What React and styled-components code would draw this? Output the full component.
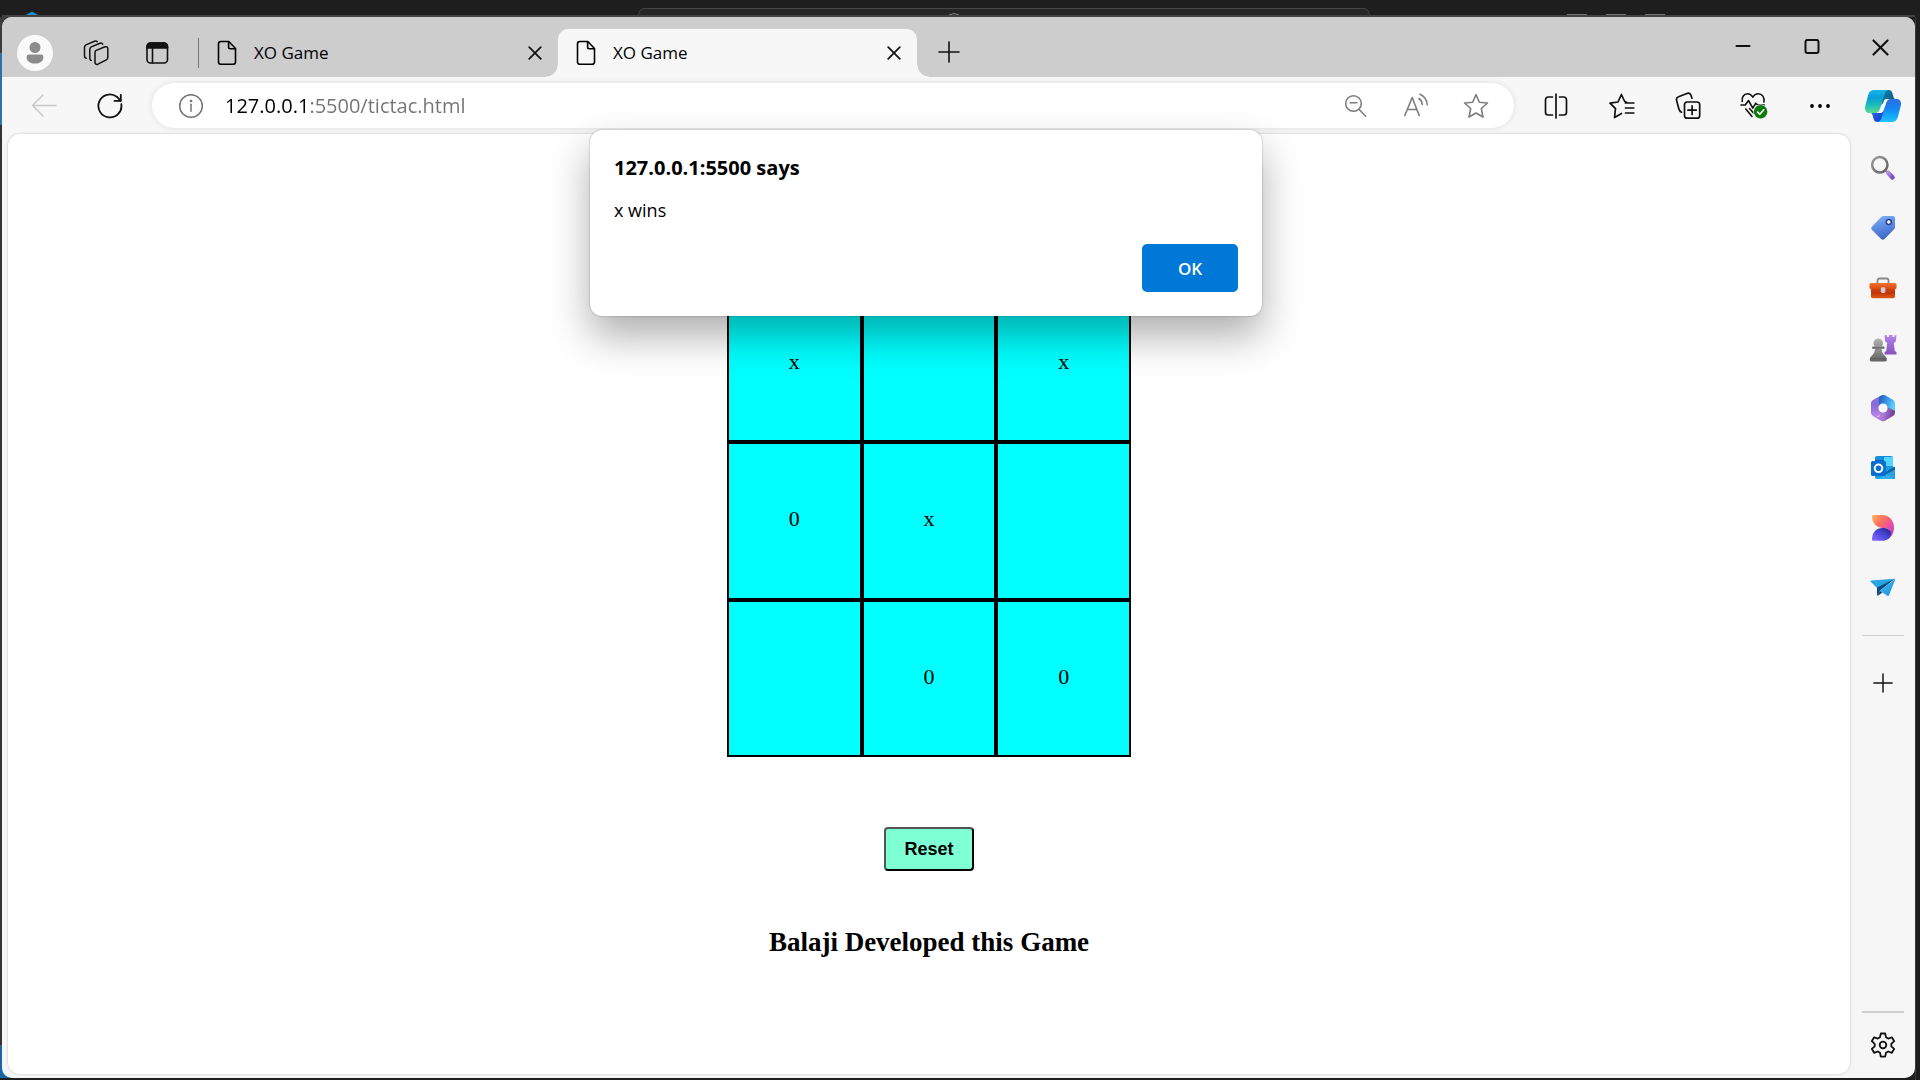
import React, { useState } from "react";
import styled, { createGlobalStyle, css } from "styled-components";

const ui = `"Open Sans", "Noto Sans", sans-serif`;
const serif = `"Liberation Serif", "Times New Roman", serif`;

const GlobalStyle = createGlobalStyle`
  * { box-sizing: border-box; }
  body { margin: 0; background: #1e1e1e; font-family: ${ui}; color: #000; }
  button, input { font: inherit; color: inherit; }
`;

/* ---------- desktop behind the browser ---------- */

const Desktop = styled.div`
  min-height: 100vh;
  display: flex;
  flex-direction: column;
  padding: 0 5px 2px 2px;
  background:
    linear-gradient(#3a3a3a, #3a3a3a) right 4px top 17px / 1px 100% no-repeat,
    linear-gradient(
      #1e1e1e 17px, #3c3c3c 17px, #3c3c3c 53px, #2b73ad 53px, #2b73ad 125px,
      #333 125px, #333 calc(100% - 33px), #1c66a5 calc(100% - 33px)
    ) left top / 12px calc(100% - 2px) no-repeat,
    #1e1e1e;
`;

const EditorTitle = styled.div`
  height: 17px;
  overflow: hidden;
  display: grid;
  grid-template-columns: 636px 732px 1fr;
  align-items: end;
  border-bottom: 2px solid #434343;
`;

const EditorLogo = styled.svg`
  width: 12px;
  height: 3px;
  margin-left: 24px;
`;

const CommandCenter = styled.div`
  height: 7px;
  display: flex;
  justify-content: center;
  align-items: flex-end;
  padding-right: 100px;
  border: 1px solid #464646;
  border-bottom: 0;
  border-radius: 7px 7px 0 0;
  background: #262626;
`;

const LayoutDots = styled.div`
  display: flex;
  justify-content: flex-end;
  gap: 19px;
  padding-right: 250px;
`;

const LayoutDot = styled.span`
  width: 20px;
  height: 1px;
  background: #777;
`;

/* ---------- browser frame ---------- */

const Browser = styled.div`
  flex: 1;
  display: flex;
  flex-direction: column;
  overflow: hidden;
  border-radius: 10px;
  background: #f6f6f6;
`;

const TabStrip = styled.header`
  height: 60px;
  display: flex;
  align-items: flex-end;
  padding-left: 15px;
  background: #cdcdcd;
`;

const StripTools = styled.div`
  height: 48px;
  display: flex;
  align-items: center;
  gap: 25px;
  padding-right: 23px;
`;

const IconButton = styled.button`
  display: flex;
  align-items: center;
  justify-content: center;
  width: ${(p) => p.$w || 36}px;
  height: ${(p) => p.$h || 36}px;
  padding: 0;
  border: 0;
  border-radius: ${(p) => (p.$round ? "50%" : "4px")};
  background: ${(p) => (p.$round ? "#fafafa" : "transparent")};
  color: ${(p) => p.$color || "#111"};
  svg { display: block; flex: none; }
`;

const Tab = styled.div`
  position: relative;
  width: 359px;
  height: 48px;
  display: flex;
  align-items: center;
  padding: 0 8px 0 18px;
  border-radius: 10px 10px 0 0;
  ${(p) =>
    p.$active &&
    css`
      background: #f7f7f7;
      &::before, &::after {
        content: "";
        position: absolute;
        bottom: 0;
        width: 12px;
        height: 12px;
      }
      &::before {
        right: 100%;
        background: radial-gradient(circle at 0 0, transparent 11px, #f7f7f7 12px);
      }
      &::after {
        left: 100%;
        background: radial-gradient(circle at 100% 0, transparent 11px, #f7f7f7 12px);
      }
    `}
`;

const TabDivider = styled.span`
  width: 1px;
  height: 30px;
  margin-bottom: 9px;
  background: #767676;
`;

const TabTitle = styled.button`
  flex: 1;
  display: flex;
  align-items: center;
  gap: 17px;
  padding: 0;
  border: 0;
  background: transparent;
  font-size: 17px;
  line-height: 24px;
`;

const NewTab = styled.div`
  height: 48px;
  display: flex;
  align-items: center;
  padding: 0 0 2px 15px;
`;

const WindowControls = styled.div`
  height: 60px;
  display: flex;
  margin-left: auto;
`;

/* ---------- toolbar ---------- */

const Toolbar = styled.div`
  display: flex;
  align-items: center;
  padding: 6px 2px 6px 9px;
  background: #f7f7f7;
`;

const AddressBar = styled.form`
  flex: 1;
  height: 45px;
  display: flex;
  align-items: center;
  margin: 0 9px;
  padding: 0 8px 0 9px;
  border-radius: 23px;
  background: #fff;
  box-shadow: 0 0 6px rgba(0, 0, 0, 0.1);
`;

const AddressInput = styled.input`
  flex: 1;
  min-width: 0;
  height: 28px;
  margin-left: 4px;
  padding: 0;
  border: 0;
  outline: 0;
  font-size: 20px;
  line-height: 28px;
  background: linear-gradient(90deg, #000 83px, #737373 83px);
  background-clip: text;
  -webkit-background-clip: text;
  -webkit-text-fill-color: transparent;
`;

/* ---------- body: page and side rail ---------- */

const Body = styled.div`
  flex: 1;
  display: flex;
`;

const Stage = styled.div`
  position: relative;
  flex: 1;
  display: flex;
  padding: 0 0 4px 6px;
`;

const Page = styled.main`
  flex: 1;
  display: flex;
  flex-direction: column;
  align-items: center;
  padding-top: 151px;
  border-radius: 12px;
  background: #fff;
  box-shadow: 0 0 3px rgba(0, 0, 0, 0.2);
  font-family: ${serif};
`;

const Board = styled.div`
  width: 404px;
  height: 472px;
  display: grid;
  grid-template-columns: repeat(3, 1fr);
  grid-template-rows: repeat(3, 1fr);
`;

const Cell = styled.button`
  padding: 0 0 3px;
  border: 2px solid #000;
  border-radius: 0;
  background: aqua;
  font-size: 22px;
  line-height: 26px;
`;

const ResetButton = styled.button`
  width: 90px;
  height: 44px;
  margin-top: 70px;
  padding: 0;
  border: 2px solid;
  border-color: #555 #000 #000 #555;
  border-radius: 4px;
  background: aquamarine;
  font: bold 18px/24px "Liberation Sans", Arial, sans-serif;
`;

const Credit = styled.h2`
  margin: 55px 0 0;
  font-size: 27px;
  line-height: 32px;
`;

const Dialog = styled.div`
  position: absolute;
  top: -4px;
  left: 50%;
  width: 672px;
  transform: translateX(-50%);
  display: flex;
  flex-direction: column;
  padding: 24px;
  border-radius: 12px;
  background: #fff;
  box-shadow: 0 0 2px rgba(0, 0, 0, 0.35), 0 20px 40px rgba(0, 0, 0, 0.32);
`;

const DialogTitle = styled.h1`
  margin: 0;
  font-size: 20px;
  font-weight: 700;
  line-height: 28px;
`;

const DialogText = styled.p`
  margin: 15px 0 21px;
  font-size: 18px;
  line-height: 26px;
`;

const DialogOk = styled.button`
  align-self: flex-end;
  width: 96px;
  height: 48px;
  border: 0;
  border-radius: 5px;
  background: #0078d7;
  color: #fff;
  font-size: 17px;
  font-weight: 600;
`;

const Rail = styled.aside`
  width: 65px;
  display: flex;
  flex-direction: column;
  align-items: center;
  padding: 4px 0 3px;
`;

const RailLine = styled.hr`
  width: 42px;
  height: ${(p) => p.$thick || 1}px;
  margin: ${(p) => p.$m};
  border: 0;
  background: #cfcfcf;
`;

/* ---------- line icons ---------- */

const Line = ({ w = 24, h = 24, sw = 1.6, vb, children }) => (
  <svg width={w} height={h} viewBox={vb || `0 0 ${w} ${h}`} fill="none" stroke="currentColor"
    strokeWidth={sw} strokeLinecap="round" strokeLinejoin="round" aria-hidden="true">
    {children}
  </svg>
);

const PersonIcon = () => (
  <svg width="18" height="22" viewBox="0 0 18 22" fill="#8c8c8c" aria-hidden="true">
    <circle cx="9" cy="5.5" r="5.5" />
    <path d="M3 12.5H15a2.4 2.4 0 0 1 2.4 2.4C17.4 19 14 21.5 9 21.5S.6 19 .6 14.9A2.4 2.4 0 0 1 3 12.5Z" />
  </svg>
);
const WorkspacesIcon = () => (
  <Line w={26} h={26} sw={1.5}>
    <path d="M12.600 10.600 22 6.800c1.500-.5 2.800.2 2.800 1.800v9c0 1.100-.5 1.900-1.500 2.300l-8.400 4.300c-1.500.6-2.900-.1-2.900-1.700v-9.400c0-1.200.2-2 .6-2.500Z" />
    <path d="M8.200 20.500c-1-.3-1.400-1-1.400-2V9.300c0-1.100.5-1.900 1.500-2.400L17 3.300c1.200-.5 2.200-.2 2.700.8" />
    <path d="M3.200 18.200c-1-.3-1.700-1-1.700-2V7.300c0-1.100.5-1.900 1.500-2.400L11.500 1.300c1.200-.4 2.200-.2 2.800.5" />
  </Line>
);
const TabActionsIcon = () => (
  <Line w={24} h={24} sw={1.6}>
    <rect x="2" y="2" width="20.500" height="20" rx="3.500" />
    <path d="M2 7V5.500A3.500 3.500 0 0 1 5.500 2h13.500A3.500 3.500 0 0 1 22.500 5.500V7Z" fill="currentColor" />
    <path d="M7.500 7v15" />
  </Line>
);
const FileIcon = () => (
  <Line w={20} h={26} sw={1.600}>
    <path d="M3.800 1.500H11.800L18.500 8.500V22a2.300 2.300 0 0 1-2.300 2.300H3.800A2.300 2.300 0 0 1 1.500 22V3.800A2.300 2.300 0 0 1 3.800 1.500Z" />
    <path d="M11.600 1.800V7a1.700 1.700 0 0 0 1.700 1.700h5" />
  </Line>
);
const CloseIcon = ({ s = 14, sw = 1.7 }) => (
  <Line w={s} h={s} vb="0 0 14 14" sw={sw}><path d="M1.200 1.200l11.600 11.600M12.800 1.200 1.200 12.800" /></Line>
);
const PlusIcon = ({ s = 22 }) => (
  <Line w={s} h={s} vb="0 0 22 22" sw={1.6}><path d="M11 1v20M1 11h20" /></Line>
);
const MinimizeIcon = () => <Line w={16} h={16} sw={2}><path d="M1.500 7h13" /></Line>;
const MaximizeIcon = () => <Line w={16} h={16} sw={2}><rect x="1.500" y=".9" width="13" height="13.200" rx="2" /></Line>;
const BackIcon = () => <Line w={26} h={24} sw={1.5}><path d="M25 11.500H1.500M12 1 1.500 11.500 12 22" /></Line>;
const ReloadIcon = () => (
  <Line w={26} h={26} sw={1.8}>
    <path d="M24.300 11.200A11.500 11.500 0 1 1 19.800 3.700L23.600 7.600" />
    <path d="M23.800 1.800v6.100h-6.300" />
  </Line>
);
const InfoIcon = () => (
  <Line w={26} h={26} sw={1.5}>
    <circle cx="13" cy="13" r="11.300" />
    <path d="M13 11.300v7" /><circle cx="13" cy="8" r=".6" fill="currentColor" />
  </Line>
);
const ZoomOutIcon = () => (
  <Line w={24} h={24} sw={1.6}><circle cx="9.500" cy="9.500" r="7.800" /><path d="M15.200 15.500 21.700 22.200M6.200 8.800h6.600" /></Line>
);
const ReadAloudIcon = () => (
  <Line w={26} h={26} sw={1.6}>
    <path d="M1.800 22.500 9.200 4.500l7 18M4.500 16.500h9.400" />
    <path d="M16 5.500c2 1.500 3 3.300 3.200 6M17 1.300c4.300 2 6.900 5.500 7.200 10.500" />
  </Line>
);
const StarIcon = () => (
  <Line w={26} h={26} sw={1.6}>
    <path d="M13 1.500 16.300 9.200 24.500 10 18.300 15.500 20 24 13 20 6 24 7.700 15.500 1.500 10 9.700 9.200Z" />
  </Line>
);
const SplitIcon = () => (
  <Line w={24} h={26} sw={1.7}>
    <path d="M8.500 4H4.200A2.700 2.700 0 0 0 1.500 6.700v12.600A2.700 2.700 0 0 0 4.200 22H8.500M15.500 4h4.300a2.700 2.700 0 0 1 2.700 2.700v12.600a2.700 2.700 0 0 1-2.700 2.700H15.500M12 1v24" />
  </Line>
);
const FavoritesIcon = () => (
  <Line w={26} h={26} sw={1.7}>
    <path d="M12.500 20.500 5.500 24.500l1-8.800L1 10.200 9 9 12.400 1.500 15.700 8.500 17.500 9.300M16.500 10h8.300M16.500 15h8.300M16.500 20h8.300" />
  </Line>
);
const CollectionsIcon = () => (
  <Line w={26} h={28} sw={1.700}>
    <rect x="9.500" y="10" width="15.200" height="16.200" rx="2.800" />
    <path d="M17.100 13.800v8.600M12.900 18.100h8.400" />
    <path d="M6.500 20.200C5 19.500 4.300 18.500 3.900 17L1.600 8.500C1.100 6.500 1.800 5.300 3.600 4.700L12.500 1.300c1.700-.4 3 .4 3.500 2l.9 3" />
  </Line>
);
const EssentialsIcon = () => (
  <svg width="28" height="28" viewBox="0 0 28 28" fill="none" stroke="currentColor" strokeWidth="1.600" strokeLinecap="round" strokeLinejoin="round" aria-hidden="true">
    <path d="M2.300 9.500C1.400 5 4 1.700 7.600 1.700c2.400 0 4 1.300 5.200 3.500 1.200-2.200 3-3.500 5.400-3.500 4 0 6.600 3.600 5.700 8.300" />
    <path d="M1 13h4.300L8.500 8.500l4.300 7.700 3-5 1.700 1.800h6.800" />
    <path d="M5.800 17 12 24.500M9.500 16.500l4 4.500" />
    <circle cx="20.600" cy="19.800" r="7.400" fill="#f7f7f7" stroke="none" />
    <circle cx="20.600" cy="19.800" r="6.800" fill="#0e7a0d" stroke="none" />
    <path d="M17.600 20.100 19.800 22.300l4-4.500" stroke="#fff" />
  </svg>
);
const MoreIcon = () => (
  <svg width="22" height="6" viewBox="0 0 22 6" aria-hidden="true"><circle cx="3" cy="3" r="1.900" /><circle cx="11" cy="3" r="1.900" /><circle cx="19" cy="3" r="1.900" /></svg>
);
const GearIcon = () => (
  <Line w={26} h={26} sw={1.8}>
    <circle cx="13" cy="13" r="3.300" />
    <path d="M10.800 1.500h4.400l.8 3.800 2.200 1.300 3.700-1.300 2.300 3.900-2.900 2.600v2.500l2.900 2.600-2.300 3.900-3.700-1.300-2.200 1.300-.8 3.800h-4.400l-.8-3.800-2.200-1.300-3.700 1.300-2.300-3.900 2.900-2.600v-2.500L1.800 9.200l2.300-3.900 3.700 1.300L10 5.300Z" />
  </Line>
);

/* ---------- colour icons ---------- */

const Grad = ({ id, stops, x2 = 1, y2 = 1, x1 = 0, y1 = 0 }) => (
  <linearGradient id={id} x1={x1} y1={y1} x2={x2} y2={y2}>
    {stops.map((c, i) => <stop key={i} offset={i / (stops.length - 1)} stopColor={c} />)}
  </linearGradient>
);

const CopilotIcon = () => (
  <svg width="36" height="32" viewBox="0 0 36 32" aria-hidden="true">
    <defs>
      <Grad id="cpA" x2={0} stops={["#18b4e4", "#0a9ed8", "#1fbdb8", "#5cdc90"]} />
      <Grad id="cpB" x2={0} stops={["#2a6fe0", "#1a7ff0", "#12a0fa", "#20c4fb"]} />
      <Grad id="cpC" stops={["#0c86a8", "#11507c"]} />
      <Grad id="cpD" stops={["#2a72f0", "#1238c8"]} />
    </defs>
    <path d="M19 0h4.500c2.500 0 3.500 1.500 4.200 4l.8 3c.4 1.400 1 2 2.500 2h-7c-2.500 0-4 1.500-5 4L16 15Z" fill="url(#cpC)" />
    <path d="M17 32h-4.500c-2.500 0-3.500-1.500-4.200-4l-.8-3c-.4-1.400-1-2-2.500-2h7c2.500 0 4-1.500 5-4L20 17Z" fill="url(#cpD)" />
    <path d="M9.500 0H24c-2.800 0-3.900 2-4.900 5.200L15.300 18c-1.100 3.600-2.300 5-5.300 5H4.500C.8 23-.8 20 .4 15.500L3 5.500C4 1.600 6 0 9.500 0Z" fill="url(#cpA)" />
    <path d="M26.500 32H12c2.800 0 3.900-2 4.900-5.200L20.700 14c1.100-3.600 2.300-5 5.300-5h5.500c3.700 0 5.300 3 4.100 7.500L33 26.500c-1 3.900-3 5.500-6.500 5.500Z" fill="url(#cpB)" />
    <path d="M19.800 9.200H24c-1.800.6-2.700 2.300-3.300 4.300L18.700 20c-.6 1.900-1.500 2.800-3.200 2.900h-3c1.500-.8 2.300-2.400 3-4.700Z" fill="#fff" />
  </svg>
);
const SearchColorIcon = () => (
  <svg width="26" height="26" viewBox="0 0 26 26" fill="none" aria-hidden="true">
    <defs><Grad id="seA" stops={["#9b9b9b", "#5f5f5f"]} /><Grad id="seB" stops={["#b18be8", "#7a4fc0"]} /></defs>
    <path d="m14.500 14.500 3.500 3.500" stroke="#999" strokeWidth="2" />
    <circle cx="9.800" cy="9.800" r="7.700" stroke="url(#seA)" strokeWidth="2.500" />
    <path d="m18.300 18 4.200 4.400" stroke="url(#seB)" strokeWidth="4.600" strokeLinecap="round" />
  </svg>
);
const TagIcon = () => (
  <svg width="26" height="26" viewBox="0 0 26 26" aria-hidden="true">
    <defs><Grad id="tgA" x2={0.3} stops={["#86b4f4", "#5d90e4", "#4068c8"]} /></defs>
    <path d="M13.500 1H23a2 2 0 0 1 2 2v9c0 1-.4 1.900-1.100 2.600l-9.400 9.300c-1 1-2.300 1-3.300 0L2 15c-1-1-1-2.400 0-3.400L11.200 2c.6-.6 1.400-1 2.300-1Z" fill="url(#tgA)" />
    <circle cx="18.800" cy="7" r="2.500" fill="#fff" stroke="#28428c" strokeWidth="1.500" />
  </svg>
);
const ToolboxIcon = () => (
  <svg width="28" height="22" viewBox="0 0 28 22" aria-hidden="true">
    <defs><Grad id="tbA" x2={0} stops={["#f0702a", "#d84a10"]} /><Grad id="tbB" x2={0} stops={["#d84a14", "#c03408", "#e05a18"]} /></defs>
    <path d="M8.500 6.500V3.500A2 2 0 0 1 10.500 1.500h7a2 2 0 0 1 2 2v3" fill="none" stroke="#888" strokeWidth="1.800" />
    <path d="M2 10h24v9.500a1.800 1.800 0 0 1-1.800 1.800H3.800A1.800 1.800 0 0 1 2 19.500Z" fill="url(#tbB)" />
    <rect x=".5" y="6" width="27" height="6" rx="1.500" fill="url(#tbA)" />
    <rect x="11.800" y="10.300" width="4.600" height="5.700" rx="1.400" fill="#c9ccd0" />
  </svg>
);
const ChessIcon = () => (
  <svg width="28" height="28" viewBox="0 0 28 28" aria-hidden="true">
    <defs><Grad id="chA" x2={0} stops={["#b884ee", "#8352bd"]} /><Grad id="chB" x2={0} stops={["#b2b2b2", "#646464"]} /></defs>
    <path d="M15.500 1.500 18 1v2h2V1h3.500v2h2V1l2 .5-.7 6-2 1.500 1 8 1.700 1v2.500H15.500V18l1.700-1 1-8-2-1.500Z" fill="url(#chA)" />
    <path d="M9.300 4.500a4.700 4.700 0 0 1 3.600 7.800h1.300c.9 0 1.600.6 1.600 1.400s-.7 1.400-1.600 1.400h-1.600c.2 3.400 1.500 5.300 4 7.400.8.700 1.200 1.500 1.200 2.500v1c0 .8-.6 1.400-1.400 1.400H2.200c-.8 0-1.400-.6-1.400-1.400v-1c0-1 .4-1.800 1.200-2.500 2.500-2.100 3.800-4 4-7.400H4.600c-.9 0-1.600-.6-1.600-1.400s.7-1.400 1.600-1.400h1A4.700 4.700 0 0 1 9.300 4.500Z" fill="url(#chB)" />
    <path d="M3.200 13.800h12M1 24.600h16.600" stroke="#585858" strokeWidth="1.400" opacity=".6" />
  </svg>
);
const OfficeIcon = () => (
  <svg width="26" height="28" viewBox="0 0 26 28" aria-hidden="true">
    <defs>
      <Grad id="ofA" stops={["#7a6cdc", "#8e6cd8", "#c08af0"]} x2={0} />
      <Grad id="ofB" stops={["#1c58a8", "#3a8fe4", "#58d0f8"]} y2={0.4} />
      <Grad id="ofC" stops={["#c98bf0", "#a878d4", "#6b3c90"]} y2={0.1} />
    </defs>
    <path d="M11 1.500 3 6C1.700 6.800 1 8 1 9.500v9c0 1.500.7 2.700 2 3.500l3 2 7-6V5Z" fill="url(#ofA)" />
    <path d="M9 4.500C9 2.500 12 0 15 1.300L23 5.700c1.300.8 2 2 2 3.500V18L13 14 9 15Z" fill="url(#ofB)" />
    <path d="M25 17.500c0 2.500-.7 3.700-2 4.500l-8 4.700c-1.400.8-2.800.8-4 0L4 22.700c2 .8 3.500.6 5-.3l4-8.400 5-.5 4.700 2.300C24 16.300 25 16.800 25 17.500Z" fill="url(#ofC)" />
    <circle cx="13" cy="14" r="4.600" fill="#f7f7f7" />
  </svg>
);
const OutlookIcon = () => (
  <svg width="26" height="26" viewBox="0 0 26 26" aria-hidden="true">
    <path d="M7 1h14a2 2 0 0 1 2 2v10H5V3a2 2 0 0 1 2-2Z" fill="#168fe0" />
    <path d="M14 2h9v9h-9Z" fill="#52d5ff" /><path d="M5 5h9v7H5Z" fill="#0867b5" />
    <path d="M5 12h20v10a2 2 0 0 1-2 2H7a2 2 0 0 1-2-2Z" fill="#1d9be4" />
    <path d="m25 11.500-11 6.800L24 24a2 2 0 0 0 1-2Z" fill="#0f5fa6" />
    <path d="m7 24 18-9.500V22a2 2 0 0 1-2 2Z" fill="#35b8f1" opacity=".75" />
    <rect x="1" y="6" width="15" height="15" rx="1.500" fill="#0870ce" />
    <circle cx="8.500" cy="13.300" r="3.800" fill="none" stroke="#fff" strokeWidth="2" />
  </svg>
);
const DesignerIcon = () => (
  <svg width="24" height="28" viewBox="0 0 24 28" aria-hidden="true">
    <defs>
      <Grad id="dsA" stops={["#ffb657", "#ff7060", "#e04ab0", "#a030f0"]} />
      <Grad id="dsB" x1={0} y1={1} x2={1} y2={0} stops={["#8a6cff", "#4a48dc", "#27207e"]} />
    </defs>
    <path d="M2.500 1H11c7 0 12 5 12 12.800C23 21 18 26.500 11 26.500c5-1.500 8-4 8.500-7.500.3-2.800-2-4.800-6-4.800C5.500 14.200 1 9 1 2.500 1 1.500 1.600 1 2.500 1Z" fill="url(#dsA)" />
    <path d="M1 25.500C1 18.500 5 14 11.500 14c5 0 8.700 2 8.700 5.500 0 4-3.700 7.300-9.700 7.300H2.300c-.8 0-1.300-.4-1.300-1.300Z" fill="url(#dsB)" />
  </svg>
);
const DropIcon = () => (
  <svg width="26" height="20" viewBox="0 0 26 20" aria-hidden="true">
    <defs><Grad id="drA" stops={["#4cc8f4", "#1488d8"]} /></defs>
    <path d="M.5 3.500C.3 3 .7 2.500 1.300 2.400L25 .7 7.500 10.500Z" fill="#26a6e2" />
    <path d="M7 9.500 25 .7 9.500 13 8 17.500c-.6 0-1-.4-1-1Z" fill="#0b4a86" />
    <path d="M25.500.7 19 17.300c-.3.700-1 .9-1.600.5L9.700 12.700Z" fill="url(#drA)" />
    <path d="m9.700 12.700 2.500 1.700L8 17.800Z" fill="#0a3a6c" />
  </svg>
);

const railApps = [
  ["Search", SearchColorIcon],
  ["Shopping", TagIcon],
  ["Tools", ToolboxIcon],
  ["Games", ChessIcon],
  ["Microsoft 365", OfficeIcon],
  ["Outlook", OutlookIcon],
  ["Designer", DesignerIcon],
  ["Drop", DropIcon],
];

const tools = [
  ["Split screen", SplitIcon],
  ["Favorites", FavoritesIcon],
  ["Collections", CollectionsIcon],
  ["Browser essentials", EssentialsIcon],
  ["Settings and more", MoreIcon],
];

const startBoard = ["x", "", "x", "0", "x", "", "", "0", "0"];

function BrowserTab({ active }) {
  return (
    <Tab $active={active}>
      <TabTitle type="button"><FileIcon />XO Game</TabTitle>
      <IconButton type="button" $w={30} aria-label="Close tab"><CloseIcon /></IconButton>
    </Tab>
  );
}

export default function App() {
  const [url, setUrl] = useState("127.0.0.1:5500/tictac.html");
  const [board, setBoard] = useState(startBoard);
  const [alertOpen, setAlertOpen] = useState(true);

  return (
    <Desktop>
      <GlobalStyle />
      <EditorTitle>
        <EditorLogo viewBox="0 0 12 3"><path d="M0 3 5 0h2l5 3Z" fill="#2489ca" /></EditorLogo>
        <CommandCenter>
          <svg width="12" height="2" viewBox="0 0 12 2"><path d="M1 2Q6-1 11 2" fill="none" stroke="#888" /></svg>
        </CommandCenter>
        <LayoutDots><LayoutDot /><LayoutDot /><LayoutDot /></LayoutDots>
      </EditorTitle>

      <Browser>
        <TabStrip>
          <StripTools>
            <IconButton type="button" $round aria-label="Profile"><PersonIcon /></IconButton>
            <IconButton type="button" aria-label="Workspaces"><WorkspacesIcon /></IconButton>
            <IconButton type="button" aria-label="Tab actions"><TabActionsIcon /></IconButton>
          </StripTools>
          <TabDivider />
          <BrowserTab />
          <BrowserTab active />
          <NewTab>
            <IconButton type="button" $w={34} aria-label="New tab"><PlusIcon /></IconButton>
          </NewTab>
          <WindowControls>
            <IconButton type="button" $w={69} $h={60} aria-label="Minimize"><MinimizeIcon /></IconButton>
            <IconButton type="button" $w={69} $h={60} aria-label="Maximize"><MaximizeIcon /></IconButton>
            <IconButton type="button" $w={69} $h={60} aria-label="Close"><CloseIcon s={17} /></IconButton>
          </WindowControls>
        </TabStrip>

        <Toolbar>
          <IconButton type="button" $w={66} $color="#c9c9c9" aria-label="Back"><BackIcon /></IconButton>
          <IconButton type="button" $w={66} aria-label="Refresh"><ReloadIcon /></IconButton>
          <AddressBar onSubmit={(e) => e.preventDefault()}>
            <IconButton type="button" $w={60} $color="#757575" aria-label="Site information"><InfoIcon /></IconButton>
            <AddressInput aria-label="Address" value={url} onChange={(e) => setUrl(e.target.value)} spellCheck={false} />
            <IconButton type="button" $w={60} $color="#7d7d7d" aria-label="Zoom out"><ZoomOutIcon /></IconButton>
            <IconButton type="button" $w={60} $color="#7d7d7d" aria-label="Read aloud"><ReadAloudIcon /></IconButton>
            <IconButton type="button" $w={60} $color="#7d7d7d" aria-label="Add to favorites"><StarIcon /></IconButton>
          </AddressBar>
          {tools.map(([name, Icon]) => (
            <IconButton key={name} type="button" $w={66} aria-label={name}><Icon /></IconButton>
          ))}
          <IconButton type="button" $w={60} aria-label="Copilot"><CopilotIcon /></IconButton>
        </Toolbar>

        <Body>
          <Stage>
            <Page>
              <Board>
                {board.map((mark, i) => (
                  <Cell key={i} type="button" aria-label={mark ? undefined : `Cell ${i + 1}`}>{mark}</Cell>
                ))}
              </Board>
              <ResetButton type="button" onClick={() => setBoard(Array(9).fill(""))}>Reset</ResetButton>
              <Credit>Balaji Developed this Game</Credit>
            </Page>
            {alertOpen && (
              <Dialog role="alertdialog" aria-labelledby="alert-title" aria-describedby="alert-text">
                <DialogTitle id="alert-title">127.0.0.1:5500 says</DialogTitle>
                <DialogText id="alert-text">x wins</DialogText>
                <DialogOk type="button" onClick={() => setAlertOpen(false)}>OK</DialogOk>
              </Dialog>
            )}
          </Stage>
          <Rail>
            {railApps.map(([name, Icon]) => (
              <IconButton key={name} type="button" $w={60} $h={60} aria-label={name}><Icon /></IconButton>
            ))}
            <RailLine $m="17px 0" />
            <IconButton type="button" $w={60} $h={60} aria-label="Customize sidebar"><PlusIcon s={20} /></IconButton>
            <RailLine $thick={2} $m="auto 0 2px" />
            <IconButton type="button" $w={60} $h={60} aria-label="Settings"><GearIcon /></IconButton>
          </Rail>
        </Body>
      </Browser>
    </Desktop>
  );
}
